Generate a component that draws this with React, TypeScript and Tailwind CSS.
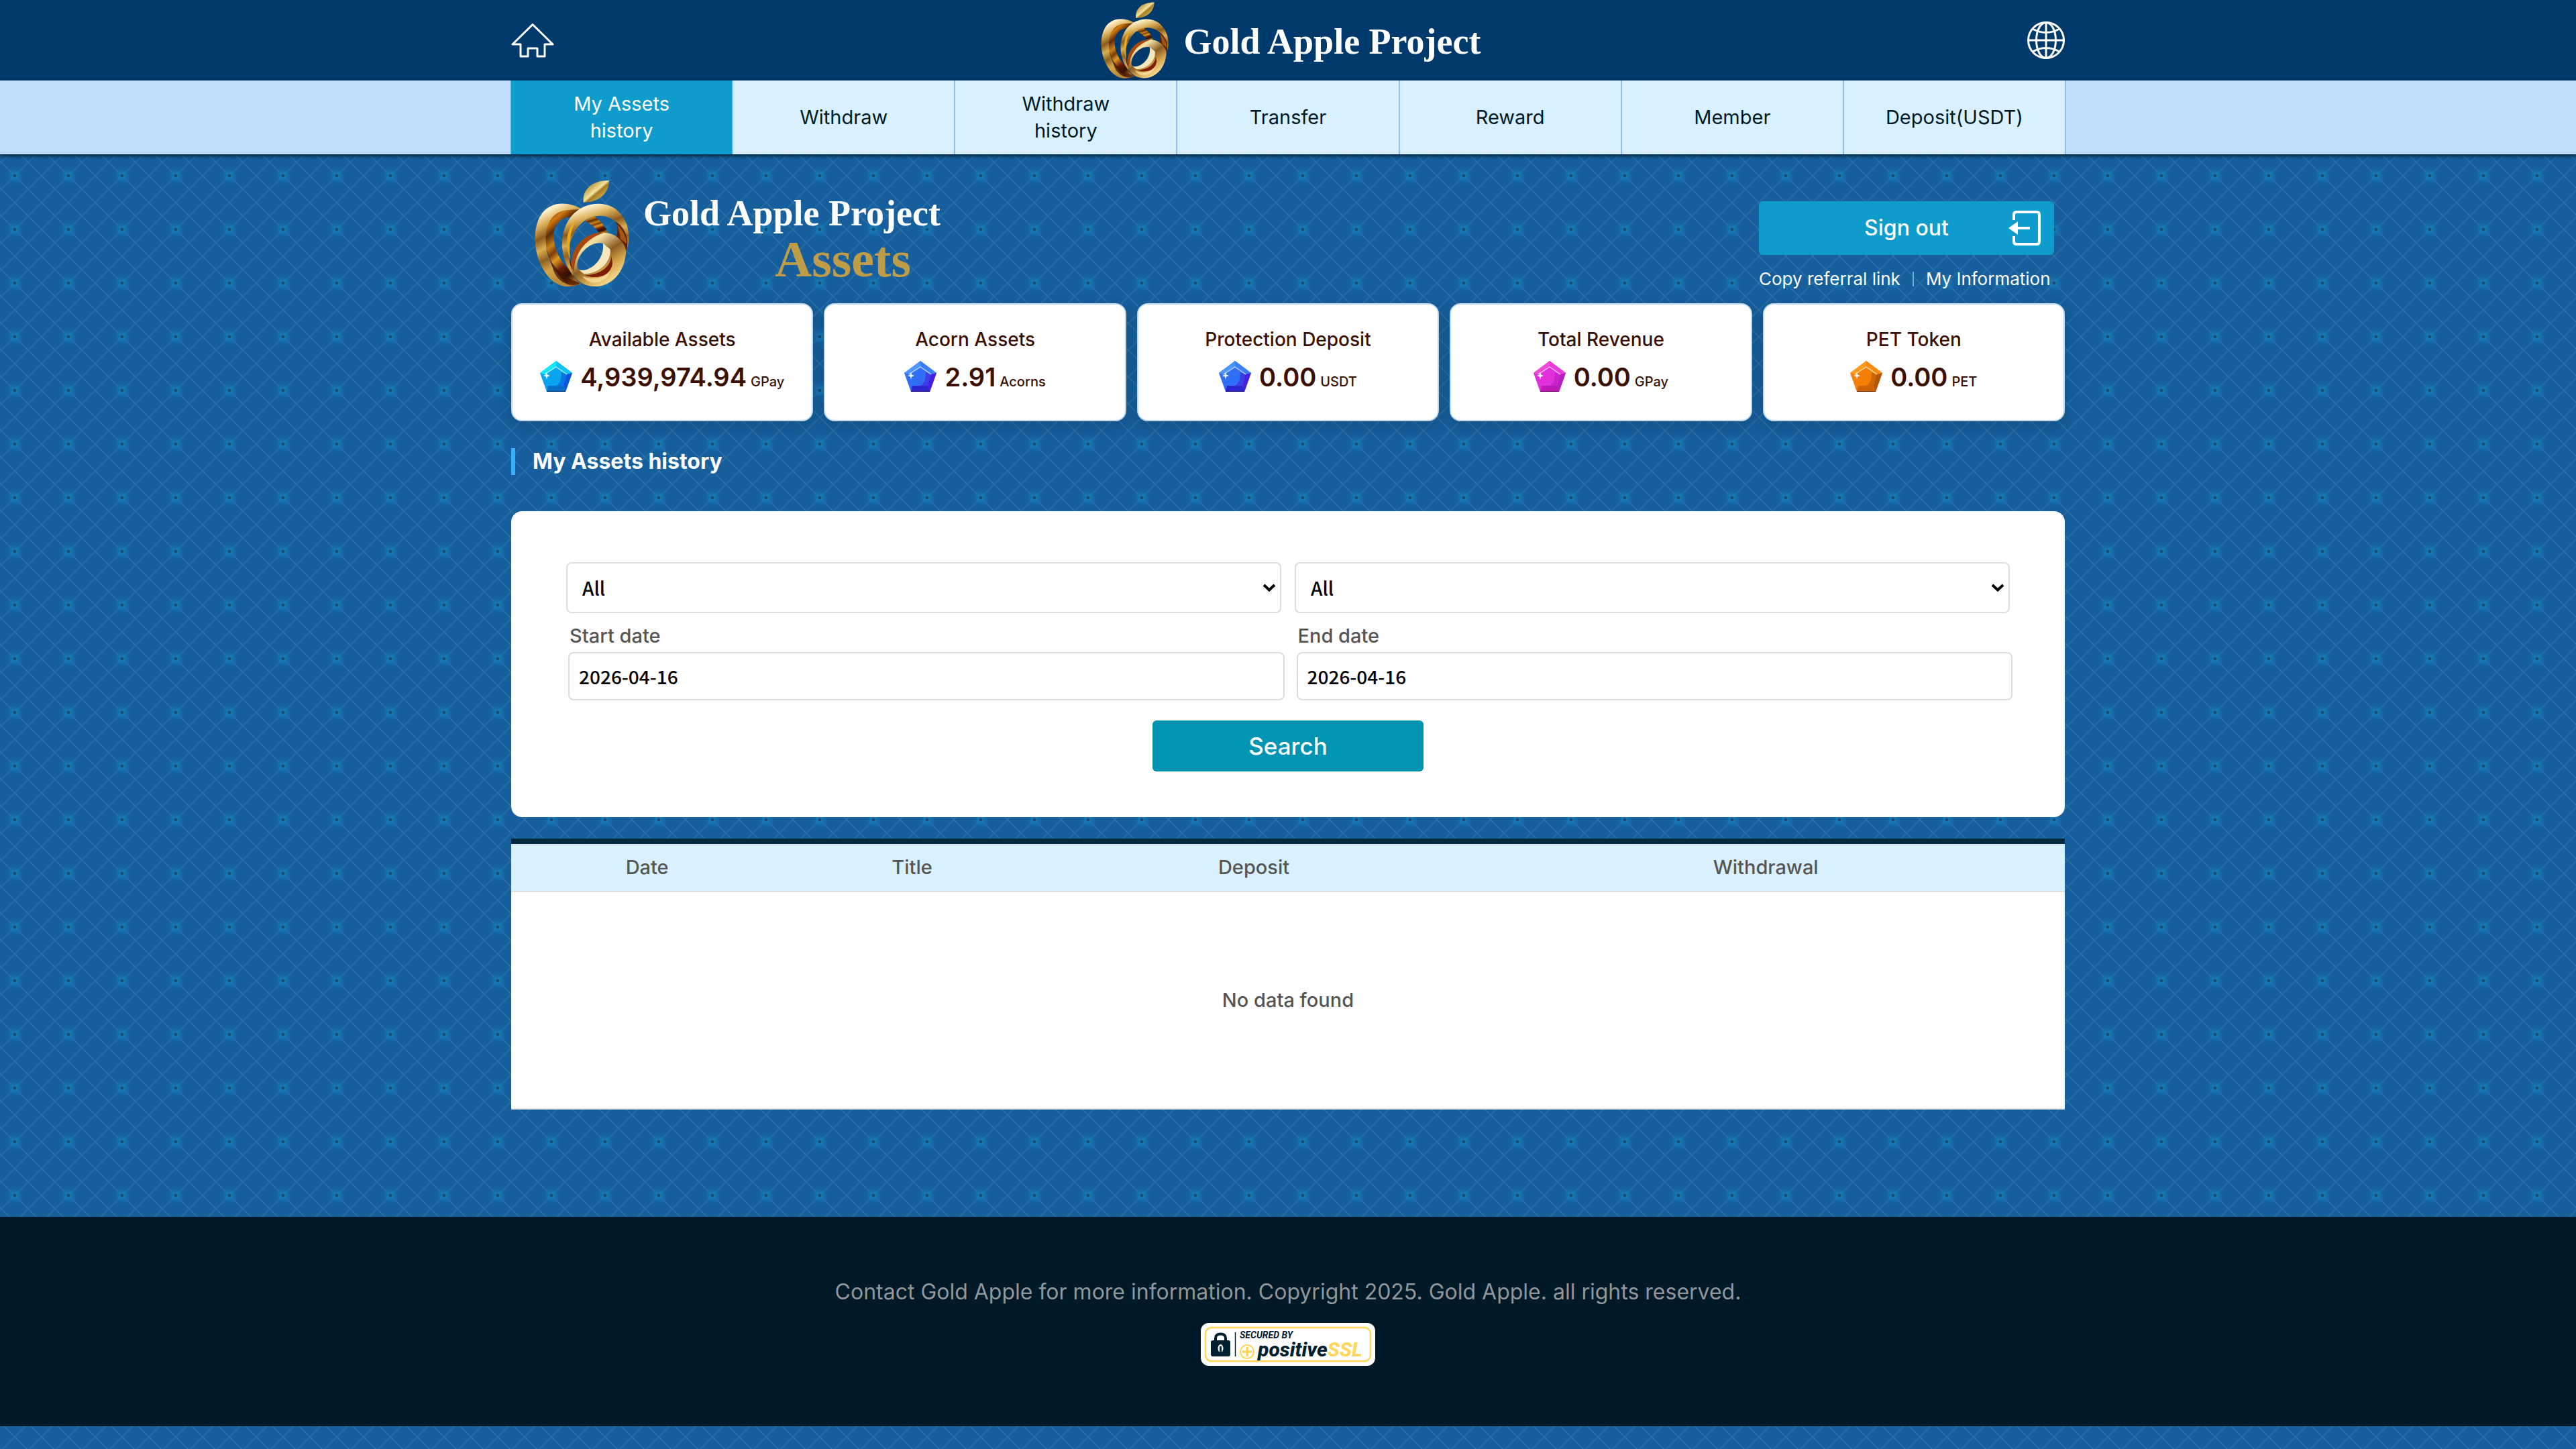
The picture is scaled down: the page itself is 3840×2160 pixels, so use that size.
const menus = [
  "My Assets history",
  "Withdraw",
  "Withdraw history",
  "Transfer",
  "Reward",
  "Member",
  "Deposit(USDT)",
];

const gems = {
  cyan: ["#0aa5ee", "#14e6fb", "#0a55e0", "#0a6fc4", "#04386f"],
  blue: ["#2f6ef5", "#4b96ff", "#4a1ee0", "#2b25cf", "#2a1470"],
  pink: ["#e22fdc", "#f04ad6", "#b81cc4", "#c01ab4", "#70106a"],
  orange: ["#f57f05", "#ff9a1c", "#b3560a", "#cf6405", "#6e3204"],
};

type GemColor = keyof typeof gems;

const assets: { label: string; value: string; unit: string; gem: GemColor }[] = [
  { label: "Available Assets", value: "4,939,974.94", unit: "GPay", gem: "cyan" },
  { label: "Acorn Assets", value: "2.91", unit: "Acorns", gem: "blue" },
  { label: "Protection Deposit", value: "0.00", unit: "USDT", gem: "blue" },
  { label: "Total Revenue", value: "0.00", unit: "GPay", gem: "pink" },
  { label: "PET Token", value: "0.00", unit: "PET", gem: "orange" },
];

function AppleLogo({ id, className }: { id: string; className: string }) {
  const band = `url(#${id}-band)`;
  const amber = `url(#${id}-amber)`;
  const ring = `url(#${id}-ring)`;
  return (
    <svg viewBox="38 28 424 476" className={className} aria-hidden="true">
      <defs>
        <linearGradient id={`${id}-band`} x1="0" y1="0" x2="0.3" y2="1">
          <stop offset="0" stopColor="#b98a35" />
          <stop offset="0.14" stopColor="#fff3cd" />
          <stop offset="0.28" stopColor="#d9ae58" />
          <stop offset="0.42" stopColor="#8a5b1c" />
          <stop offset="0.55" stopColor="#dcae52" />
          <stop offset="0.68" stopColor="#8f6120" />
          <stop offset="0.82" stopColor="#d3a44a" />
          <stop offset="1" stopColor="#b98a38" />
        </linearGradient>
        <linearGradient id={`${id}-amber`} x1="0.2" y1="0" x2="0.6" y2="1">
          <stop offset="0" stopColor="#6b3208" />
          <stop offset="0.14" stopColor="#d07a12" />
          <stop offset="0.26" stopColor="#5c2a06" />
          <stop offset="0.4" stopColor="#c9811a" />
          <stop offset="0.5" stopColor="#7c3d08" />
          <stop offset="0.6" stopColor="#e09a22" />
          <stop offset="0.74" stopColor="#6a1f05" />
          <stop offset="0.88" stopColor="#2c0f05" />
          <stop offset="1" stopColor="#b06a18" />
        </linearGradient>
        <linearGradient id={`${id}-ring`} x1="0.1" y1="0" x2="0.8" y2="1">
          <stop offset="0" stopColor="#c9963c" />
          <stop offset="0.25" stopColor="#f6e2a8" />
          <stop offset="0.5" stopColor="#8a5c22" />
          <stop offset="0.7" stopColor="#d6a54c" />
          <stop offset="0.88" stopColor="#f3d58a" />
          <stop offset="1" stopColor="#94641f" />
        </linearGradient>
        <linearGradient id={`${id}-leaf`} x1="0" y1="0" x2="1" y2="1">
          <stop offset="0.2" stopColor="#b58a2c" />
          <stop offset="0.48" stopColor="#f3e59f" />
          <stop offset="0.55" stopColor="#a57c26" />
          <stop offset="0.8" stopColor="#d8b450" />
        </linearGradient>
      </defs>
      <path d="M255 128C250 70 290 30 370 30C368 84 330 127 255 128Z" fill={`url(#${id}-leaf)`} />
      <path
        d="M250 158C200 148 150 152 112 190C72 240 78 345 122 412C148 460 176 494 200 503L246 490C226 480 214 462 206 436C160 406 130 350 123 290C119 240 142 206 182 194L222 190Z"
        fill={amber}
      />
      <path
        d="M250 158C182 120 100 122 62 190C24 260 36 370 85 440C112 482 155 508 200 502C150 470 102 410 90 330C82 262 92 206 138 176C176 154 218 164 250 158Z"
        fill={band}
      />
      <path d="M90 330C96 372 128 436 200 470L240 488C214 504 150 500 122 432Z" fill="#4a1606" opacity="0.75" />
      <path d="M262 210L302 188C338 214 356 240 363 266L328 268C312 242 290 226 262 210Z" fill={amber} />
      <path d="M182 240C200 210 230 188 262 178L268 204C222 232 196 290 190 340C190 370 198 400 208 424L200 440C164 380 158 300 182 240Z" fill={amber} />
      <path
        d="M212 456C146 380 142 258 205 185C260 125 345 122 395 155C456 200 474 286 442 350C452 300 436 246 402 216C356 176 292 178 245 222C190 276 172 350 205 430Z"
        fill={band}
      />
      <path d="M398 214C440 236 464 300 444 346L402 280C410 254 410 234 398 214Z" fill="#5b2006" />
      <path d="M404 226C430 248 446 280 448 312L420 290C416 262 412 246 404 226Z" fill="#a4560e" />
      <path d="M182 300C184 250 204 220 226 200C200 244 188 300 196 380C186 352 182 330 182 300Z" fill="#e9a91c" />
      <path
        fillRule="evenodd"
        d="M205 430C192 350 258 262 345 262C412 264 450 320 444 356C436 440 380 505 300 502C250 498 214 470 205 430ZM342 310C290 298 235 350 228 400C224 426 240 434 262 430C312 420 352 368 342 310Z"
        fill={ring}
      />
      <path d="M345 263C258 256 190 340 204 420L214 440C212 362 258 292 345 263Z" fill="#a8480c" />
      <path d="M342 310L374 336C382 386 330 446 258 446L234 428C290 442 352 374 342 310Z" fill="#f7e7ba" />
      <path d="M380 366C376 414 330 450 262 452C304 470 376 462 384 400Z" fill="#7d1d04" />
      <path d="M250 456C300 476 350 466 374 430C366 480 290 510 250 456Z" fill="#fbe6a6" opacity="0.7" />
    </svg>
  );
}

function Gem({ color }: { color: GemColor }) {
  const [face, light, right, low, edge] = gems[color];
  return (
    <svg viewBox="0 0 48 46" className="h-[46px] w-12 shrink-0" aria-hidden="true">
      <path d="M24 0L48 18L38 46H10L0 18Z" fill={face} />
      <path d="M24 0L0 18L7 20L24 9L40 20L48 18Z" fill={light} />
      <path d="M24 0L24 9L40 20L48 18Z" fill={face} opacity="0.55" />
      <path d="M48 18L40 20L35 37L38 46Z" fill={right} />
      <path d="M40 20L35 37H24C30 33 32 28 32 17Z" fill={right} opacity="0.6" />
      <path d="M12 37H35L38 46H10Z" fill={low} />
      <path d="M10 45H38V46H10Z" fill={edge} />
      <path d="M7 20L24 9L40 20" fill="none" stroke="#fff" strokeOpacity="0.7" strokeWidth="1.4" />
      <path d="M10 16L11 20.500L15 22L11 23.500L10 28L9 23.500L5 22L9 20.500Z" fill="#fff" />
    </svg>
  );
}

function Header() {
  return (
    <header className="bg-[#003a6d]">
      <div className="mx-auto flex h-[120px] max-w-[2316px] items-center justify-between">
        <a href="#" aria-label="Home">
          <svg viewBox="0 0 64 52" className="h-13 w-16" fill="none" stroke="#fff" strokeWidth="3" strokeLinejoin="round">
            <path d="M32 2.500L2 32H14V50H25V38H39V50H50V32H62Z" />
          </svg>
        </a>
        <a href="#" className="flex items-center gap-[22px]">
          <AppleLogo id="top" className="h-[114px] w-[102px]" />
          <span className="pt-1 font-['Liberation_Serif',serif] text-[54px] leading-[60px] font-bold text-white">
            Gold Apple Project
          </span>
        </a>
        <button type="button" aria-label="Language">
          <svg viewBox="0 0 56 56" className="size-14" fill="none" stroke="#fff" strokeWidth="3">
            <circle cx="28" cy="28" r="26.500" />
            <ellipse cx="28" cy="28" rx="14.500" ry="26.500" />
            <path d="M28 1V55M1 28H55M8 11Q28 22 48 11M8 45Q28 34 48 45" />
          </svg>
        </button>
      </div>
    </header>
  );
}

function Nav() {
  return (
    <nav className="relative bg-[#c0dffc] shadow-[0_2px_6px_#001926]">
      <ul className="mx-auto grid h-[110px] max-w-[2320px] grid-cols-7 border-l-2 border-[#8fc1ee]">
        {menus.map((menu, i) => (
          <li key={menu} className="border-r-2 border-[#8fc1ee]">
            <a
              href="#"
              className={`flex h-full items-center justify-center px-14 text-center text-[29px] leading-10 ${
                i === 0 ? "bg-[#0e9ccc] text-white" : "bg-[#d8f0ff] text-[#001926]"
              }`}
            >
              {menu}
            </a>
          </li>
        ))}
      </ul>
    </nav>
  );
}

function Hero() {
  return (
    <section className="flex items-start justify-between pb-5">
      <div className="flex gap-5 pt-[38px] pl-[35px]">
        <AppleLogo id="hero" className="h-[160px] w-[142px]" />
        <h1 className="flex flex-col pt-5 font-['Liberation_Serif',serif] font-bold">
          <span className="text-[54px] leading-[60px] text-white">Gold Apple Project</span>
          <span className="pr-11 text-right text-[76px] leading-[76px] text-[#bf9d48]">Assets</span>
        </h1>
      </div>
      <div className="mr-4 w-[440px] pt-[70px]">
        <button
          type="button"
          className="relative flex h-20 w-full items-center justify-center rounded-md bg-[#0e9ccc] text-[32px] font-medium text-white"
        >
          Sign out
          <svg viewBox="0 0 48 52" className="absolute right-5 h-13 w-12" fill="none" stroke="#fff" strokeWidth="4" aria-hidden="true">
            <path d="M8 14V6Q8 2 12 2H42Q46 2 46 6V46Q46 50 42 50H12Q8 50 8 46V38" />
            <path d="M12 26H32" />
            <path d="M0 26L14 16V36Z" fill="#fff" stroke="none" />
          </svg>
        </button>
        <div className="mt-5 flex items-center gap-[18px] text-[26px] leading-8 text-white">
          <a href="#">Copy referral link</a>
          <span className="h-[22px] w-[2px] bg-[#5fb4dc]" />
          <a href="#">My Information</a>
        </div>
      </div>
    </section>
  );
}

function AssetCards() {
  return (
    <ul className="grid grid-cols-5 gap-4">
      {assets.map((asset) => (
        <li
          key={asset.label}
          className="rounded-2xl border-2 border-[#bdd8ee] bg-white pt-[34px] pb-10 text-center font-medium text-[#3b1002] shadow-[0_8px_20px_#00192630]"
        >
          <h2 className="text-[28px] leading-9">{asset.label}</h2>
          <div className="mt-[14px] flex justify-center gap-3">
            <Gem color={asset.gem} />
            <p className="flex items-baseline gap-[6px]">
              <strong className="text-[38px] leading-[48px] font-semibold">{asset.value}</strong>
              <span className="text-[20px] leading-6">{asset.unit}</span>
            </p>
          </div>
        </li>
      ))}
    </ul>
  );
}

function TypeSelect({ label }: { label: string }) {
  return (
    <div className="relative flex flex-1 items-center">
      <select
        aria-label={label}
        className="h-[76px] w-full appearance-none rounded-lg border-2 border-[#ddd] bg-white px-[22px] font-['Noto_Sans_CJK_KR',sans-serif] text-[28px] font-medium text-black"
      >
        <option>All</option>
      </select>
      <svg viewBox="0 0 20 12" className="pointer-events-none absolute right-2 h-3 w-5" fill="none" stroke="#000" strokeWidth="4" aria-hidden="true">
        <path d="M2 2L10 9.500L18 2" />
      </svg>
    </div>
  );
}

function DateField({ id, label }: { id: string; label: string }) {
  return (
    <div className="flex-1">
      <label htmlFor={id} className="block pl-[2px] text-[29px] leading-9 font-medium text-[#555]">
        {label}
      </label>
      <input
        id={id}
        type="text"
        defaultValue="2026-04-16"
        className="mt-[6px] h-[72px] w-full rounded-lg border-2 border-[#ddd] bg-white px-[14px] font-['Noto_Sans_CJK_KR',sans-serif] text-[28px] font-medium text-black"
      />
    </div>
  );
}

function SearchForm() {
  return (
    <form className="mt-[54px] rounded-2xl bg-white pt-[76px] pb-[68px]">
      <div className="flex gap-5 px-[82px]">
        <TypeSelect label="Asset" />
        <TypeSelect label="Type" />
      </div>
      <div className="mt-4 flex gap-[18px] pr-[78px] pl-[85px]">
        <DateField id="start-date" label="Start date" />
        <DateField id="end-date" label="End date" />
      </div>
      <button
        type="button"
        className="mx-auto mt-[30px] block h-[76px] w-[404px] rounded-md bg-[#0095b3] text-[35px] font-medium text-white"
      >
        Search
      </button>
    </form>
  );
}

function HistoryTable() {
  return (
    <div className="mt-8 border-t-8 border-[#00293f]">
      <table className="w-full table-fixed border-separate bg-white text-center text-[29px] font-medium text-[#555] [border-spacing:0]">
        <thead>
          <tr className="h-[72px] bg-[#d8f0ff]">
            <th className="w-[17.5%] border-b-2 border-[#ddd] font-medium">Date</th>
            <th className="w-[16.6%] border-b-2 border-[#ddd] font-medium">Title</th>
            <th className="w-[27.4%] border-b-2 border-[#ddd] font-medium">Deposit</th>
            <th className="border-b-2 border-[#ddd] font-medium">Withdrawal</th>
          </tr>
        </thead>
        <tbody>
          <tr className="h-[324px]">
            <td colSpan={4} className="border-b-2 border-[#ddd]">
              No data found
            </td>
          </tr>
        </tbody>
      </table>
    </div>
  );
}

function SslBadge() {
  return (
    <svg viewBox="0 0 260 64" className="mx-auto mt-[26px] h-16 w-[260px]" role="img" aria-label="Secured by PositiveSSL">
      <rect width="260" height="64" rx="12" fill="#fff" />
      <rect x="7" y="7" width="246" height="50" rx="9" fill="none" stroke="#ffd65a" strokeWidth="2.500" />
      <rect x="15" y="26" width="29" height="24" rx="3" fill="#00202f" />
      <path d="M22 27V23Q22 16.500 29.500 16.500T37 23V27" fill="none" stroke="#00202f" strokeWidth="4" />
      <ellipse cx="29.500" cy="38" rx="4" ry="6" fill="#fff" />
      <path d="M29.500 35V44" stroke="#00202f" strokeWidth="3" />
      <path d="M51.500 14V50" stroke="#00202f" strokeWidth="1.500" />
      <g fontFamily="Roboto, sans-serif" fontStyle="italic" fill="#00202f">
        <text x="58" y="23" fontSize="14" fontWeight="700">SECURED BY</text>
        <text x="85" y="50" fontSize="30" fontWeight="800">
          positive<tspan fill="#ffd65a">SSL</tspan>
        </text>
      </g>
      <circle cx="69" cy="43" r="10" fill="none" stroke="#ffd65a" strokeWidth="2" />
      <path d="M69 36V50M62 43H76" stroke="#ffd65a" strokeWidth="3.500" />
    </svg>
  );
}

export default function App() {
  return (
    <div className="min-h-screen bg-[#165e9c] bg-[radial-gradient(circle,#1b4a6e_0_1px,#1b4a6ecc_2px,transparent_3px),radial-gradient(circle,#1285c4b3_0,#1285c480_5px,#1578b230_10px,transparent_16px),linear-gradient(45deg,transparent_47%,#78b4c833_50%,transparent_53%),linear-gradient(-45deg,transparent_47%,#78b4c833_50%,transparent_53%)] bg-[size:80px_80px,80px_80px,40px_40px,40px_40px] bg-[position:-18px_-18px,-18px_-18px,2px_2px,2px_2px] font-['Inter',sans-serif]">
      <Header />
      <Nav />
      <main className="mx-auto max-w-[2316px]">
        <Hero />
        <AssetCards />
        <h2 className="mt-10 border-l-[6px] border-[#38b0ff] pl-[26px] text-[32px] leading-10 font-bold text-white">
          My Assets history
        </h2>
        <SearchForm />
        <HistoryTable />
      </main>
      <footer className="mt-40 bg-[#001926] pt-[92px] pb-[90px]">
        <p className="text-center text-[32px] leading-10 text-[#8f979c]">
          Contact Gold Apple for more information. Copyright 2025. Gold Apple. all rights reserved.
        </p>
        <SslBadge />
      </footer>
    </div>
  );
}
